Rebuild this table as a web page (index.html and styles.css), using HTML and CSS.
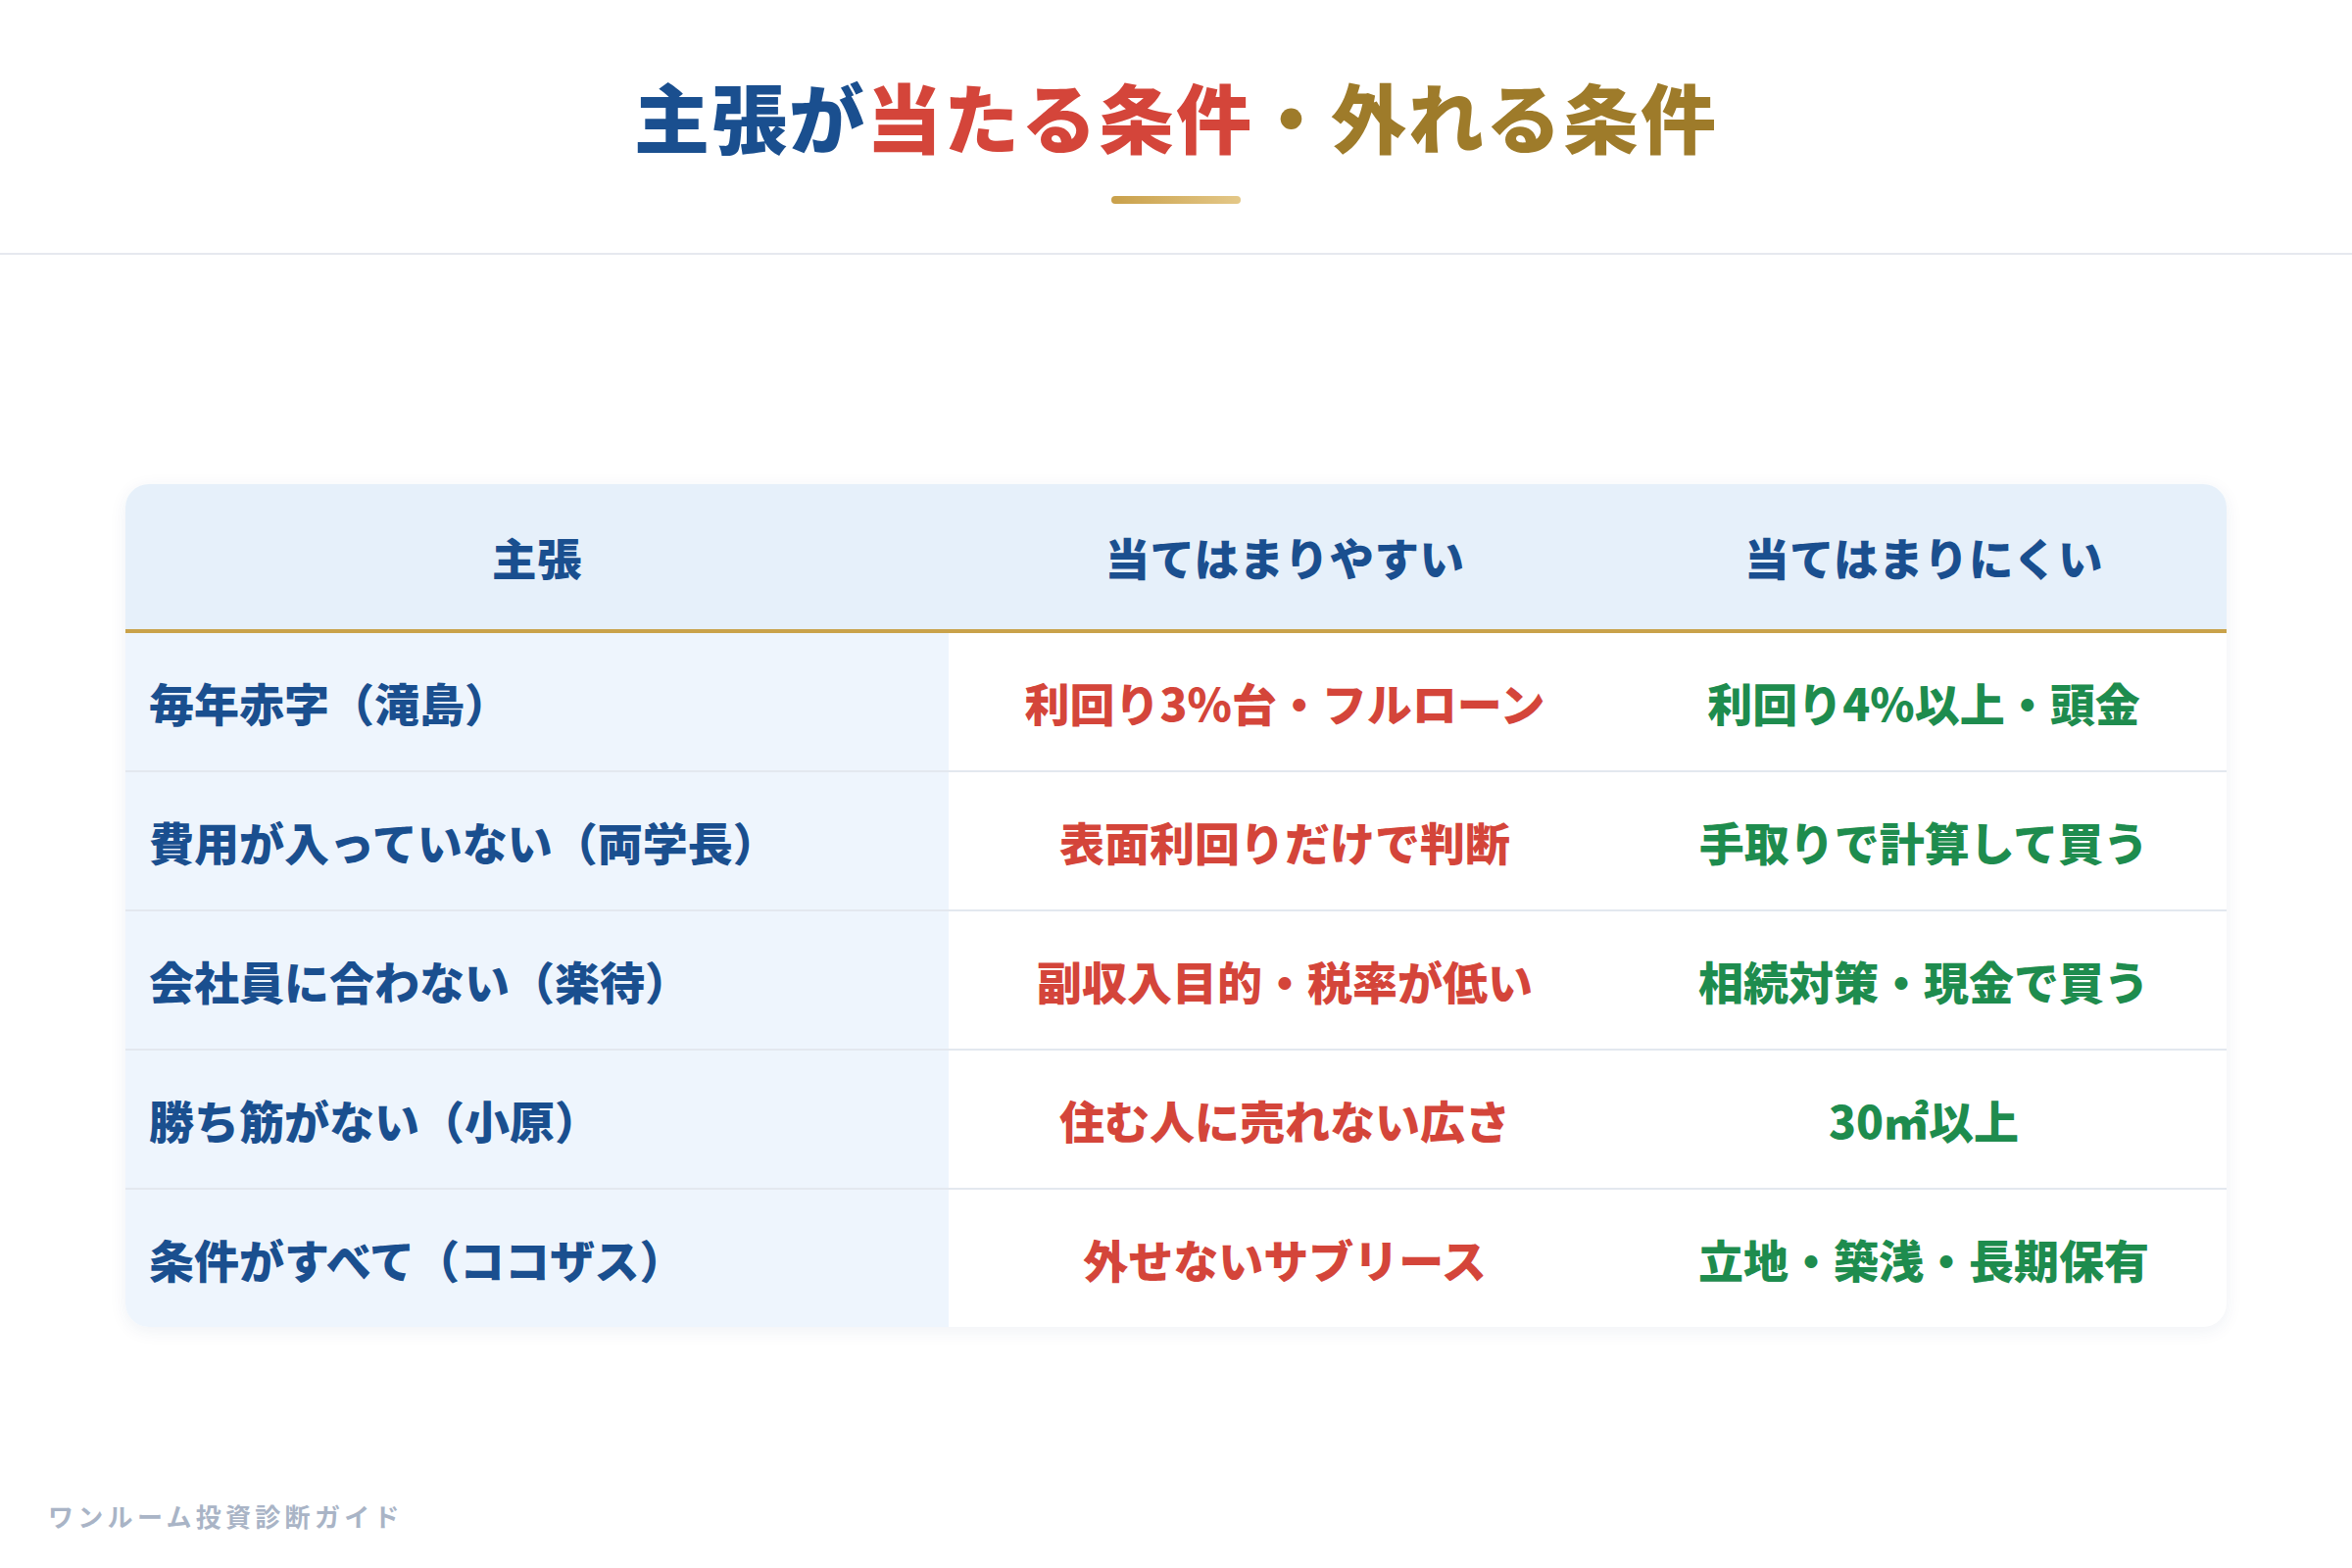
FILE: index.html
```html
<!DOCTYPE html>
<html lang="ja">
<head>
<meta charset="utf-8">
<title>主張が当たる条件・外れる条件</title>
<link rel="stylesheet" href="styles.css">
</head>
<body>
<div class="page">
  <header class="top">
    <h1 class="title"><span class="t-blue">主張が</span><span class="t-red">当たる条件</span><span class="t-gold">・外れる条件</span></h1>
    <div class="bar"></div>
  </header>
  <main class="main">
    <div class="table">
      <div class="th">主張</div>
      <div class="th">当てはまりやすい</div>
      <div class="th">当てはまりにくい</div>

      <div class="td claim">毎年赤字（滝島）</div>
      <div class="td yes">利回り3%台・フルローン</div>
      <div class="td no">利回り4%以上・頭金</div>

      <div class="td claim">費用が入っていない（両学長）</div>
      <div class="td yes">表面利回りだけで判断</div>
      <div class="td no">手取りで計算して買う</div>

      <div class="td claim">会社員に合わない（楽待）</div>
      <div class="td yes">副収入目的・税率が低い</div>
      <div class="td no">相続対策・現金で買う</div>

      <div class="td claim">勝ち筋がない（小原）</div>
      <div class="td yes">住む人に売れない広さ</div>
      <div class="td no">30㎡以上</div>

      <div class="td claim last">条件がすべて（ココザス）</div>
      <div class="td yes last">外せないサブリース</div>
      <div class="td no last">立地・築浅・長期保有</div>
    </div>
  </main>
  <footer class="foot">ワンルーム投資診断ガイド</footer>
</div>
</body>
</html>
```
FILE: styles.css
```css
* { box-sizing: border-box; }
html, body { margin: 0; padding: 0; background: #ffffff; }
body {
  width: 2400px;
  height: 1600px;
  font-family: "Noto Sans CJK JP", "Noto Sans", sans-serif;
}
.page {
  width: 2400px;
  height: 1600px;
  display: flex;
  flex-direction: column;
}
.top {
  height: 260px;
  border-bottom: 2px solid #e6e9ef;
  display: flex;
  flex-direction: column;
  align-items: center;
  padding-top: 79px;
}
.title {
  margin: 0;
  font-size: 77px;
  line-height: 1;
  font-weight: 900;
  letter-spacing: 2px;
}
.t-blue { color: #1a4f8f; }
.t-red { color: #d4453a; }
.t-gold { color: #9e7b2a; }
.bar {
  margin-top: 44px;
  width: 132px;
  height: 8px;
  border-radius: 4px;
  background: linear-gradient(90deg, #c9a04a, #e4c888);
}
.main {
  padding: 234px 128px 0;
}
.table {
  display: grid;
  grid-template-columns: 840px 686px 1fr;
  border-radius: 24px;
  overflow: hidden;
  box-shadow: 0 4px 18px rgba(30, 60, 110, 0.07);
  background: #ffffff;
}
.th {
  height: 152px;
  background: #e6f0fa;
  border-bottom: 4px solid #c9a24a;
  display: flex;
  align-items: center;
  justify-content: center;
  color: #1a4f8f;
  font-size: 45.5px;
  font-weight: 900;
  letter-spacing: 0.5px;
}
.td {
  height: 142px;
  border-bottom: 2px solid #e3e8ef;
  display: flex;
  align-items: center;
  justify-content: center;
  font-size: 46px;
  font-weight: 900;
}
.td.last { height: 140px; border-bottom: 0; }
.claim {
  justify-content: flex-start;
  padding-left: 24px;
  background: #eef5fd;
  color: #1a4f8f;
}
.yes { color: #d4453a; }
.no { color: #1e8c4e; }
.foot {
  margin-top: auto;
  padding: 0 0 40px 49px;
  font-size: 26px;
  line-height: 1;
  font-weight: 700;
  color: #a9b4c6;
  letter-spacing: 4.3px;
}
```
